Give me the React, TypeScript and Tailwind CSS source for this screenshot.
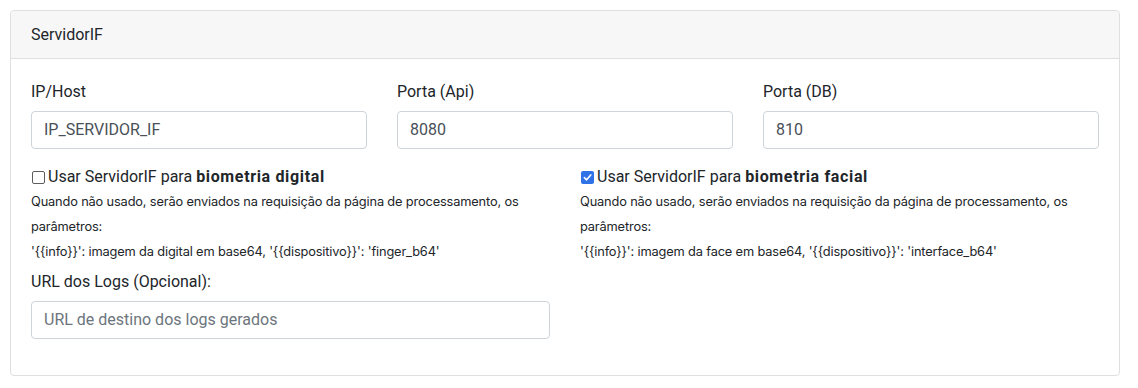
const Field = ({ label, value, placeholder }: { label: string; value?: string; placeholder?: string }) => (
  <div className="mb-4">
    <label className="block mb-[7px] text-[16px] leading-6">{label}</label>
    <div
      className={
        "h-[38px] border border-[#ced4da] rounded-[4px] px-3 flex items-center text-[16px] bg-white " +
        (value ? "text-[#495057]" : "text-[#6c757d]")
      }
    >
      {value ?? placeholder}
    </div>
  </div>
);

const Check = ({ checked, title, strong, device, what }: { checked: boolean; title: string; strong: string; device: string; what: string }) => (
  <div>
    <div className="flex items-center text-[16px] leading-6">
      {checked ? (
        <span className="ml-[1px] mr-[3px] w-[13px] h-[13px] rounded-[2px] bg-[#2f72e8] flex items-center justify-center">
          <svg width="9" height="9" viewBox="0 0 10 10">
            <path d="M1.5 5.2 L4 7.6 L8.6 2.2" fill="none" stroke="white" strokeWidth="1.8" strokeLinecap="round" strokeLinejoin="round" />
          </svg>
        </span>
      ) : (
        <span className="ml-[1px] mr-[3px] w-[13px] h-[13px] rounded-[2px] border border-[#5e5e5e] bg-white" />
      )}
      <span>
        {title} <b className="font-bold tracking-[0.65px]">{strong}</b>
      </span>
    </div>
    <p className="text-[16px] leading-6">
      <small className="text-[12.8px] tracking-[-0.15px] font-['Inter',sans-serif]">
        Quando não usado, serão enviados na requisição da página de processamento, os
        <br />
        parâmetros:
        <br />
        '{"{{info}}"}': imagem da {what} em base64, '{"{{dispositivo}}"}': '{device}'
      </small>
    </p>
  </div>
);

export default function App() {
  return (
    <div className="bg-white min-h-[388px] pt-[10px] pl-[10px] text-[#212529] font-['Roboto',sans-serif]">
      <div className="w-[1110px] border border-[#dfdfdf] rounded-[4px]">
        <div className="h-[48px] px-5 flex items-center bg-[#f7f7f7] border-b border-[#dfdfdf] text-[16px] rounded-t-[4px]">
          ServidorIF
        </div>
        <div className="p-5 pt-[21px]">
          <div className="grid grid-cols-3 gap-x-[30px]">
            <Field label="IP/Host" value="IP_SERVIDOR_IF" />
            <Field label="Porta (Api)" value="8080" />
            <Field label="Porta (DB)" value="810" />
          </div>
          <div className="grid grid-cols-2 gap-x-[30px]">
            <div>
              <Check checked={false} title="Usar ServidorIF para" strong="biometria digital" what="digital" device="finger_b64" />
              <div className="mt-[6px]">
                <Field label="URL dos Logs (Opcional):" placeholder="URL de destino dos logs gerados" />
              </div>
            </div>
            <div>
              <Check checked={true} title="Usar ServidorIF para" strong="biometria facial" what="face" device="interface_b64" />
            </div>
          </div>
        </div>
      </div>
    </div>
  );
}
